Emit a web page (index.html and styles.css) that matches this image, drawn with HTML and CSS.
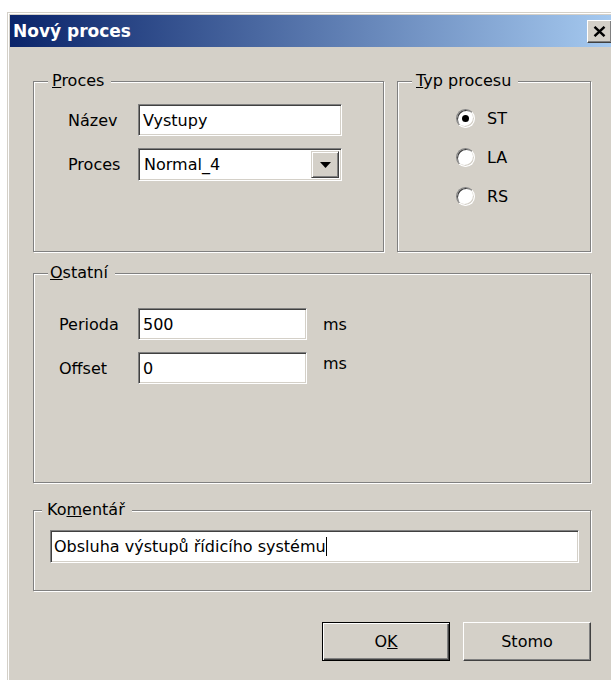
FILE: index.html
```html
<!DOCTYPE html>
<html lang="cs">
<head>
<meta charset="utf-8">
<title>Nový proces</title>
<link rel="stylesheet" href="styles.css">
</head>
<body>
<div class="window">
  <div class="titlebar">
    <span class="title">Nový proces</span>
    <div class="close-btn">
      <svg width="13" height="11" viewBox="0 0 13 11"><path d="M1.5 0.8 L11.5 10.2 M11.5 0.8 L1.5 10.2" stroke="#000" stroke-width="2.4" fill="none"/></svg>
    </div>
  </div>

  <div class="client">
    <div class="top-row">
      <fieldset class="group">
        <legend class="group-title"><u>P</u>roces</legend>
        <div class="form-grid">
          <span class="label">Název</span>
          <div class="edit">Vystupy</div>
          <span class="label">Proces</span>
          <div class="edit combo">
            <span class="combo-text">Normal_4</span>
            <span class="drop-btn">
              <svg width="11" height="6" viewBox="0 0 11 6"><path d="M0 0 H11 L5.5 6 Z" fill="#000"/></svg>
            </span>
          </div>
        </div>
      </fieldset>

      <fieldset class="group">
        <legend class="group-title"><u>T</u>yp procesu</legend>
        <div class="radio-list">
          <div class="radio-row"><span class="radio checked"></span><span>ST</span></div>
          <div class="radio-row"><span class="radio"></span><span>LA</span></div>
          <div class="radio-row"><span class="radio"></span><span>RS</span></div>
        </div>
      </fieldset>
    </div>

    <fieldset class="group group-other">
      <legend class="group-title title-other"><u>O</u>statní</legend>
      <div class="params">
        <span class="label">Perioda</span>
        <div class="edit edit-num">500</div>
        <span class="unit">ms</span>
        <span class="label">Offset</span>
        <div class="edit edit-num">0</div>
        <span class="unit unit-raised">ms</span>
      </div>
    </fieldset>

    <fieldset class="group group-comment">
      <legend class="group-title title-comment">Ko<u>m</u>entář</legend>
      <div class="comment-body">
        <div class="edit edit-comment">Obsluha výstupů řídicího systému<span class="caret"></span></div>
      </div>
    </fieldset>

    <div class="buttons">
      <div class="btn btn-default">O<u>K</u></div>
      <div class="btn">Stomo</div>
    </div>
  </div>
</div>
</body>
</html>
```

FILE: styles.css
```css
* {
  box-sizing: border-box;
}

html,
body {
  margin: 0;
  padding: 0;
  background: #fff;
  overflow: hidden;
}

body {
  font-family: "DejaVu Sans", sans-serif;
  font-size: 16px;
  color: #000;
}

/* dialog frame */
.window {
  width: 607px;
  min-height: 700px;
  margin: 12px 0 0 7px;
  padding: 2px 0 0 2px;
  border-top: 1px solid #d4d0c8;
  border-left: 1px solid #d4d0c8;
  background: #d4d0c8;
  box-shadow: inset 1px 1px #fff;
}

.titlebar {
  display: flex;
  align-items: center;
  height: 32px;
  padding-left: 3px;
  background: linear-gradient(to right, #0a246a, #a6caf0);
  color: #fff;
  font-weight: bold;
  font-size: 17px;
}

.close-btn {
  display: flex;
  align-items: center;
  justify-content: center;
  width: 25px;
  height: 23px;
  margin-left: auto;
  margin-right: 2px;
  margin-top: 1px;
  background: #d4d0c8;
  border: 1px solid;
  border-color: #fff #404040 #404040 #fff;
  box-shadow: inset -1px -1px #808080;
}

.client {
  padding: 24px 23px 0 23px;
}

.top-row {
  display: grid;
  grid-template-columns: 351px 1fr;
  column-gap: 13px;
}

/* etched group box */
.group {
  margin: 0;
  padding: 0;
  min-width: 0;
  border: 1px solid #808080;
  box-shadow: inset 1px 1px #fff, 1px 1px #fff;
}

.group-title {
  margin-left: 14px;
  padding: 0 7px 0 4px;
  line-height: 20px;
  background: #d4d0c8;
}

.title-other {
  padding-left: 2px;
}

.title-comment {
  margin-left: 8px;
  padding-left: 5px;
}

.label {
  white-space: nowrap;
}

/* sunken edit field */
.edit {
  display: flex;
  align-items: center;
  height: 32px;
  padding: 0 4px;
  background: #fff;
  border: 1px solid;
  border-color: #808080 #fff #fff #808080;
  box-shadow: inset 1px 1px #404040, inset -1px -1px #d4d0c8;
  white-space: nowrap;
}

.form-grid {
  display: grid;
  grid-template-columns: 70px 204px;
  row-gap: 12px;
  align-items: center;
  padding: 13px 0 70px 34px;
}

.combo {
  height: 33px;
  padding: 2px;
  align-items: stretch;
}

.combo-text {
  flex: 1;
  display: flex;
  align-items: center;
  padding-left: 3px;
}

.drop-btn {
  display: flex;
  align-items: center;
  justify-content: center;
  width: 28px;
  background: #d4d0c8;
  border: 1px solid;
  border-color: #d4d0c8 #404040 #404040 #d4d0c8;
  box-shadow: inset 1px 1px #fff, inset -1px -1px #808080;
}

/* radio buttons */
.radio-list {
  display: flex;
  flex-direction: column;
  gap: 15px;
  padding: 15px 0 0 58px;
}

.radio-row {
  display: flex;
  align-items: center;
  gap: 12px;
  height: 24px;
}

.radio {
  position: relative;
  width: 19px;
  height: 19px;
  border-radius: 50%;
  background: #fff;
  border: 1px solid;
  border-color: #808080 #fff #fff #808080;
  box-shadow: inset 1px 1px #404040, inset -1px -1px #d4d0c8;
}

.radio.checked::after {
  content: "";
  position: absolute;
  left: 5px;
  top: 5px;
  width: 7px;
  height: 7px;
  border-radius: 50%;
  background: #000;
}

/* Ostatní */
.group-other {
  margin-top: 11px;
}

.params {
  display: grid;
  grid-template-columns: 79px 169px auto;
  row-gap: 12px;
  align-items: center;
  padding: 25px 0 98px 25px;
}

.unit {
  margin-left: 16px;
}

.unit-raised {
  margin-top: -9px;
}

/* Komentář */
.group-comment {
  margin-top: 17px;
}

.comment-body {
  padding: 10px 11px 27px 16px;
}

.edit-comment {
  height: 33px;
  padding-left: 3px;
}

.caret {
  display: inline-block;
  width: 1px;
  height: 19px;
  background: #000;
}

/* dialog buttons */
.buttons {
  display: flex;
  justify-content: flex-end;
  gap: 13px;
  margin-top: 31px;
}

.btn {
  display: flex;
  align-items: center;
  justify-content: center;
  width: 128px;
  height: 39px;
  background: #d4d0c8;
  border: 1px solid;
  border-color: #fff #404040 #404040 #fff;
  box-shadow: inset -1px -1px #808080;
}

.btn-default {
  border-color: #000;
  box-shadow: inset 1px 1px #fff, inset -1px -1px #404040, inset -2px -2px #808080;
}
```
